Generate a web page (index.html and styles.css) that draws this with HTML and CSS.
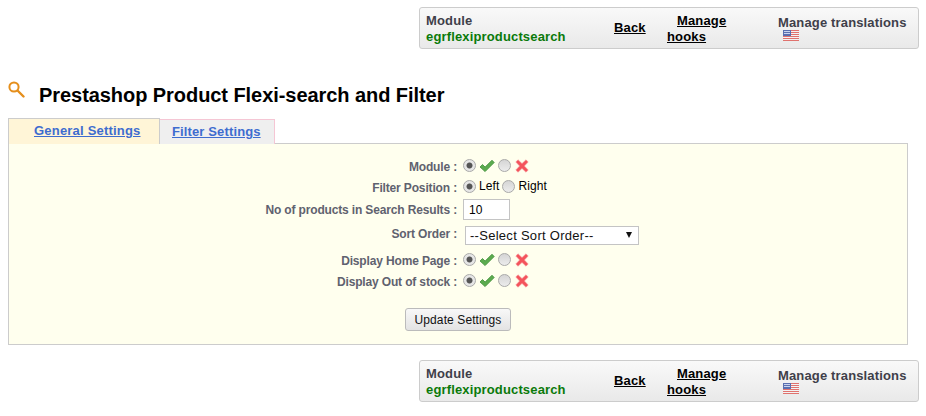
FILE: index.html
```html
<!DOCTYPE html>
<html>
  <head>
    <meta charset="UTF-8" />
    <title>Prestashop Product Flexi-search and Filter</title>
    <link rel="stylesheet" href="styles.css">
  </head>
  <body>
    <div class="toolbar">
      <div class="tool-module">Module<br /><span class="module-name">egrflexiproductsearch</span></div>
      <a class="tool-back" href="#">Back</a>
      <div class="tool-hooks"><a href="#" class="hooks-first">Manage</a><br /><a href="#">hooks</a></div>
      <div class="tool-trans">
        Manage translations
        <svg class="flag" width="16" height="11" viewBox="0 0 16 11"><use href="#us-flag" /></svg>
      </div>
    </div>

    <div class="page-title">
      <svg class="search-icon" width="17" height="17" viewBox="0 0 17 17">
        <circle cx="6" cy="6" r="4.6" fill="none" stroke="#e58f1c" stroke-width="2" />
        <path d="M9.5 9.5l6 6" stroke="#e58f1c" stroke-width="2.4" stroke-linecap="round" />
      </svg>
      <h1>Prestashop Product Flexi-search and Filter</h1>
    </div>

    <div class="tabs">
      <a href="#" class="tab tab-active"><span>General Settings</span></a>
      <a href="#" class="tab tab-other"><span>Filter Settings</span></a>
    </div>

    <form class="panel">
      <div class="row">
        <label>Module :</label>
        <div class="field">
          <input type="radio" name="module" checked />
          <svg class="ico" width="16" height="14" viewBox="0 0 16 14"><use href="#tick" /></svg>
          <input type="radio" name="module" />
          <svg class="ico" width="14" height="14" viewBox="0 0 14 14"><use href="#cross" /></svg>
        </div>
      </div>
      <div class="row">
        <label>Filter Position :</label>
        <div class="field plain">
          <input type="radio" name="pos" checked /><span>Left</span>
          <input type="radio" name="pos" /><span>Right</span>
        </div>
      </div>
      <div class="row row-input">
        <label>No of products in Search Results :</label>
        <div class="field"><input class="text-input" type="text" value="10" /></div>
      </div>
      <div class="row row-select">
        <label>Sort Order :</label>
        <div class="field">
          <div class="select">--Select Sort Order--<span class="arrow"></span></div>
        </div>
      </div>
      <div class="row">
        <label>Display Home Page :</label>
        <div class="field">
          <input type="radio" name="home" checked />
          <svg class="ico" width="16" height="14" viewBox="0 0 16 14"><use href="#tick" /></svg>
          <input type="radio" name="home" />
          <svg class="ico" width="14" height="14" viewBox="0 0 14 14"><use href="#cross" /></svg>
        </div>
      </div>
      <div class="row">
        <label>Display Out of stock :</label>
        <div class="field">
          <input type="radio" name="stock" checked />
          <svg class="ico" width="16" height="14" viewBox="0 0 16 14"><use href="#tick" /></svg>
          <input type="radio" name="stock" />
          <svg class="ico" width="14" height="14" viewBox="0 0 14 14"><use href="#cross" /></svg>
        </div>
      </div>
      <div class="actions"><button type="button">Update Settings</button></div>
    </form>

    <div class="toolbar toolbar-bottom">
      <div class="tool-module">Module<br /><span class="module-name">egrflexiproductsearch</span></div>
      <a class="tool-back" href="#">Back</a>
      <div class="tool-hooks"><a href="#" class="hooks-first">Manage</a><br /><a href="#">hooks</a></div>
      <div class="tool-trans">
        Manage translations
        <svg class="flag" width="16" height="11" viewBox="0 0 16 11"><use href="#us-flag" /></svg>
      </div>
    </div>

    <!-- shared icons -->
    <svg class="defs" width="0" height="0">
      <defs>
        <symbol id="tick" viewBox="0 0 16 14">
          <path d="M1 8l2.5-2.5 2.6 2.6L13 1.2l2.2 2.3L6.1 12.6z" fill="#5cab4e" stroke="#3f8f3a" stroke-width="0.8" />
        </symbol>
        <symbol id="cross" viewBox="0 0 14 14">
          <path d="M3 .8L7 4.6 11 .8l2.2 2.2L9.4 7l3.8 4-2.2 2.2L7 9.4l-4 3.8L.8 11l3.8-4L.8 3z" fill="#f4545c" stroke="#f59a9d" stroke-width="0.6" />
        </symbol>
        <symbol id="us-flag" viewBox="0 0 16 11">
          <rect width="16" height="11" fill="#f3f3f3" />
          <rect y="0" width="16" height="1" fill="#e0726e" />
          <rect y="2" width="16" height="1" fill="#e0726e" />
          <rect y="4" width="16" height="1" fill="#e0726e" />
          <rect y="6" width="16" height="1" fill="#e0726e" />
          <rect y="8" width="16" height="1" fill="#e0726e" />
          <rect y="10" width="16" height="1" fill="#e0726e" />
          <rect width="8" height="6" fill="#5a6fb0" />
          <rect x="1" y="1" width="6" height="1" fill="#c9d3ee" />
          <rect x="1" y="3" width="6" height="1" fill="#c9d3ee" />
        </symbol>
      </defs>
    </svg>
  </body>
</html>
```

FILE: styles.css
```css
body {
  margin: 0;
  padding: 7px 7px 0 8px;
  font-family: "Liberation Sans", Arial, sans-serif;
  font-size: 12px;
  color: #000;
  background: #fff;
}
a {
  color: #000;
}
.toolbar {
  box-sizing: border-box;
  display: flex;
  align-items: center;
  width: 500px;
  height: 42px;
  margin-left: 411px;
  padding-left: 6px;
  border: 1px solid #ccc;
  border-radius: 3px;
  background: linear-gradient(#f9f9f9, #e9e9e9);
  font-size: 13px;
  font-weight: bold;
  letter-spacing: 0.15px;
  line-height: 16px;
  color: #3f3f4a;
}
.toolbar-bottom {
  margin-top: 15px;
}
.tool-module {
  width: 188px;
  margin-top: 1px;
}
.module-name {
  color: #0a7a0a;
}
.tool-back {
  width: 53px;
}
.tool-hooks {
  width: 111px;
  margin-top: 1px;
}
.hooks-first {
  margin-left: 10px;
}
.tool-trans {
  line-height: 15px;
}
.flag {
  display: block;
  margin-left: 5px;
}
.page-title {
  display: flex;
  height: 69px;
}
.search-icon {
  margin-top: 32px;
}
h1 {
  margin: 35px 0 0 14px;
  font-size: 20px;
  letter-spacing: -0.06px;
  line-height: 23px;
}
.tabs {
  display: flex;
  align-items: flex-end;
  height: 26px;
  margin-bottom: -1px;
}
.tab {
  box-sizing: border-box;
  display: block;
  font-size: 13px;
  font-weight: bold;
  letter-spacing: 0.2px;
  color: #3e6ccf;
}
.tab-active {
  width: 152px;
  height: 26px;
  padding: 4px 0 0 25px;
  border: 1px solid #ccc;
  border-bottom: 0;
  background: #fff5d7;
}
.tab-other {
  width: 115px;
  height: 25px;
  padding: 4px 0 0 12px;
  border: 1px solid #f5c6d4;
  border-left: 0;
  border-bottom: 0;
  background: #efefef;
  letter-spacing: 0.13px;
}
.panel {
  box-sizing: border-box;
  width: 900px;
  height: 202px;
  padding-top: 12px;
  border: 1px solid #ccc;
  background: #ffffee;
}
.row {
  display: flex;
  align-items: center;
  height: 21px;
}
.row-input {
  height: 23px;
}
.row-select {
  height: 27px;
  margin-bottom: 2px;
}
.row-select label {
  margin-bottom: 2px;
}
.row label {
  width: 448px;
  text-align: right;
  font-weight: bold;
  letter-spacing: -0.15px;
  color: #5f626f;
}
.field {
  display: flex;
  align-items: center;
  margin-left: 6px;
}
.field input[type="radio"] {
  appearance: none;
  box-sizing: border-box;
  margin: 0 0 2px;
  width: 13px;
  height: 13px;
  border: 1px solid #a9a9a9;
  border-radius: 50%;
  background: linear-gradient(#d5d5d5, #ececec);
}
.field input[type="radio"]:checked {
  background: radial-gradient(circle, #555 0, #555 2.6px, #e6e6e6 3.4px);
}
.field .ico {
  margin: 0 3px 1px 3px;
}
.field .ico:last-child {
  margin: 0 0 1px 4px;
}
.plain span {
  margin: 0 3px 3px 3px;
  letter-spacing: 0.1px;
}
.text-input {
  box-sizing: border-box;
  width: 47px;
  height: 21px;
  margin: 0;
  padding: 0 5px;
  border: 1px solid #c4c4c4;
  background: #fff;
  font-family: inherit;
  font-size: 12px;
  color: #000;
}
.select {
  box-sizing: border-box;
  position: relative;
  width: 174px;
  height: 19px;
  margin: 1px 0 0 2px;
  padding-left: 4px;
  border: 1px solid #c4c4c4;
  background: #fff;
  font-size: 13px;
  letter-spacing: 0.28px;
  line-height: 17px;
  color: #111;
}
.arrow {
  position: absolute;
  right: 6px;
  top: 5px;
  border-top: 6px solid #111;
  border-left: 3.5px solid transparent;
  border-right: 3.5px solid transparent;
}
.actions {
  margin-top: 16px;
  padding-left: 396px;
}
button {
  box-sizing: border-box;
  width: 106px;
  height: 23px;
  padding: 0;
  border: 1px solid #bbb;
  border-radius: 3px;
  background: linear-gradient(#f8f8f8, #e3e3e3);
  font-family: inherit;
  font-size: 12px;
  letter-spacing: 0.1px;
  color: #111;
}
.defs {
  position: absolute;
}
```
